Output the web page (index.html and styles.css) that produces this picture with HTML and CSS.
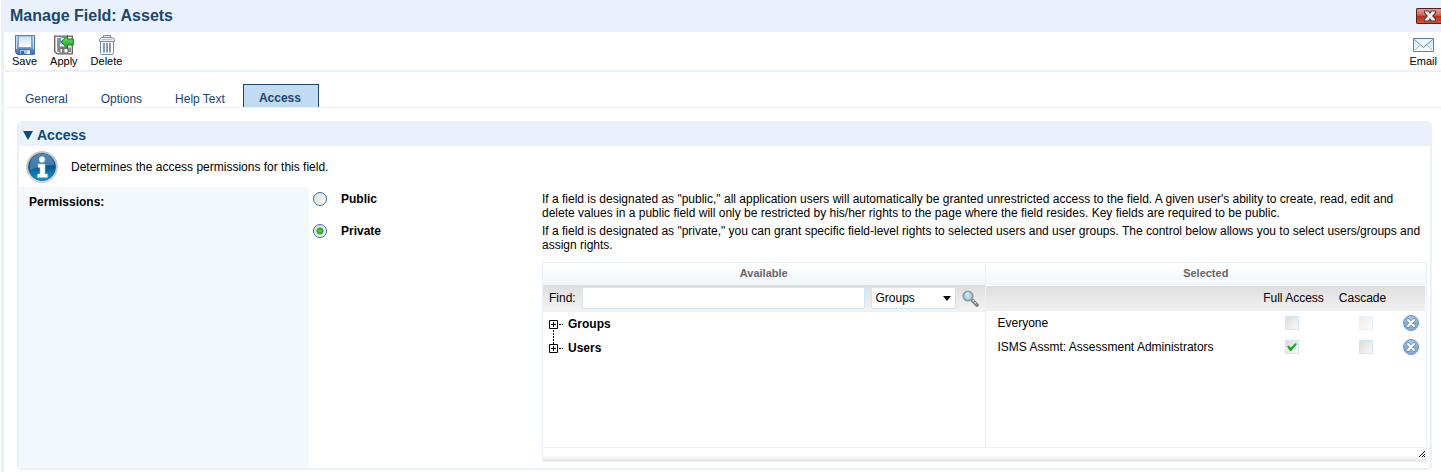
FILE: index.html
```html
<!DOCTYPE html>
<html lang="en">
<head>
<meta charset="utf-8">
<title>Manage Field: Assets</title>
<link rel="stylesheet" href="styles.css">
</head>
<body>
<svg class="defs" aria-hidden="true">
  <defs>
    <linearGradient id="blue" x1="0" y1="0" x2="0" y2="1"><stop offset="0" stop-color="#a9cbee"/><stop offset=".6" stop-color="#6d9ad0"/><stop offset="1" stop-color="#3f6db0"/></linearGradient>
    <linearGradient id="paper" x1="0" y1="0" x2="0" y2="1"><stop offset="0" stop-color="#c9e0f2"/><stop offset="1" stop-color="#ffffff"/></linearGradient>
    <linearGradient id="green" x1="0" y1="0" x2="0" y2="1"><stop offset="0" stop-color="#7be06a"/><stop offset="1" stop-color="#0fa51a"/></linearGradient>
    <linearGradient id="info" x1="0" y1="0" x2="0" y2="1"><stop offset="0" stop-color="#2a6b9d"/><stop offset=".5" stop-color="#0a578f"/><stop offset="1" stop-color="#0aa0e4"/></linearGradient>
    <linearGradient id="rim" x1="0" y1="0" x2="0" y2="1"><stop offset="0" stop-color="#b9b9b9"/><stop offset="1" stop-color="#e2e2e2"/></linearGradient>
    <radialGradient id="lens"><stop offset="0" stop-color="#d9f2fc"/><stop offset="1" stop-color="#7fb9de"/></radialGradient>
    <symbol id="remove" viewBox="0 0 16 16">
      <circle cx="8" cy="8" r="7.500" fill="#86add9" stroke="#6c96cc"/>
      <path d="M2 6a6.300 6.300 0 0 1 12 0Q8 9 2 6z" fill="#a9c6e8"/>
      <path d="M5.200 5.200l5.600 5.600M10.800 5.200L5.200 10.800" stroke="#5f8ac4" stroke-width="4" stroke-linecap="round"/>
      <path d="M5.200 5.200l5.600 5.600M10.800 5.200L5.200 10.800" stroke="#fff" stroke-width="2.400" stroke-linecap="round"/>
    </symbol>
  </defs>
</svg>
<div class="page">
  <header class="titlebar">
    <h1>Manage Field: Assets</h1>
    <button class="close" aria-label="Close">
      <svg width="12" height="12" viewBox="0 0 12 12"><path d="M.5 1h4L6 3l1.500-2h4v2L8.800 6l2.700 3v2h-4L6 9l-1.500 2h-4V9l2.700-3L.5 3z" fill="#f6f1f0" stroke="#54403e" stroke-width="1.200"/></svg>
    </button>
  </header>

  <div class="toolbar">
    <button class="tool">
      <svg width="20" height="20" viewBox="0 0 20 20"><path d="M.500.500h19v19h-17l-2-2z" fill="url(#blue)" stroke="#4f77aa"/><path d="M3.500 1h13v11.500h-13z" fill="url(#paper)" stroke="#6f98c8" stroke-width=".8"/><path d="M1.500 1v13M18.500 1v13" stroke="#c9def4"/><path d="M4.500 19v-4.500h11V19z" fill="#a9c3e2" stroke="#3d66a0" stroke-width=".8"/><path d="M6 16h3v3H6z" fill="#3f6ba8"/><path d="M11 19l3-4h1v4z" fill="#edf4fb"/></svg>
      <span>Save</span>
    </button>
    <button class="tool">
      <svg width="20" height="20" viewBox="0 0 20 20"><path d="M.700 1.200h17.600v17.600H3l-2.300-2.300z" fill="#fbfbfb" stroke="#606060" stroke-width="1.300"/><path d="M3 3h3v14H4l-1-1zM14 12.500h3V17h-3z" fill="#909090"/><path d="M6 11.500h7V13H6z" fill="#777"/><path d="M6 13.500h8V18H6z" fill="#fff" stroke="#707070"/><path d="M8 14h2.500v4H8z" fill="#7d7d7d"/><path d="M6.500 2.500h5v2l-5 4z" fill="#dff1fb" stroke="#5aaad5"/><path d="M7 7L13.500.700V4h5.800v6h-5.800v3.300z" fill="url(#green)" stroke="#197a20"/></svg>
      <span>Apply</span>
    </button>
    <button class="tool">
      <svg width="20" height="20" viewBox="0 0 20 20"><g fill="none" stroke="#6a8db5"><path d="M6.500 2V.500h7V2M4.500 2.500h11l2 2v2h-15v-2z" fill="#e9f1f8"/><path d="M3.500 6.500v11l1 2h11l1-2v-11z" fill="#fff"/><path d="M4.500 4.500h11" stroke="#b0c4d9"/></g><path d="M7 8v9.500M10 8v9.500M13 8v9.500" stroke="#8190a5" stroke-width="1.800"/></svg>
      <span>Delete</span>
    </button>
    <button class="tool email">
      <svg width="21" height="20" viewBox="0 0 21 20"><path d="M.500 3.500h20v13H.500z" fill="url(#paper)" stroke="#5584ab"/><path d="M2 15l6-6M19 15l-6-6" stroke="#9db8cf" fill="none"/><path d="M1.500 4.500l9 8 9-8" fill="#f9fcff" stroke="#6d91b2"/></svg>
      <span>Email</span>
    </button>
  </div>

  <nav class="tabs">
    <a href="#general">General</a>
    <a href="#options">Options</a>
    <a href="#help">Help Text</a>
    <a href="#access" class="active" aria-current="page">Access</a>
  </nav>

  <section class="panel" id="access">
    <h2><svg width="10" height="9" viewBox="0 0 10 9"><path d="M0 0h10L5 9z" fill="#064a7e"/></svg>Access</h2>
    <div class="intro">
      <svg width="32" height="32" viewBox="0 0 32 32"><circle cx="16" cy="16" r="15.500" fill="url(#rim)" stroke="#c4c4c4"/><circle cx="16" cy="16" r="13.500" fill="url(#info)" stroke="#2d5f85"/><path d="M4 15a12 12 0 0 1 24-1Q16 14 4 19z" fill="#6fa3c9" opacity=".5"/><circle cx="16" cy="8.500" r="3" fill="#fff" stroke="#aebfcc" stroke-width=".6"/><path d="M12 13h7v10h2.500v3.500h-10V23H14v-6.500h-2z" fill="#fff" stroke="#aebfcc" stroke-width=".6"/></svg>
      <p>Determines the access permissions for this field.</p>
    </div>
    <div class="body">
      <div class="label" id="perm">Permissions:</div>
      <div class="choices" role="radiogroup" aria-labelledby="perm">
        <div class="choice">
          <label><input type="radio" name="permission">Public</label>
          <p>If a field is designated as "public," all application users will automatically be granted unrestricted access to the field. A given user's ability to create, read, edit and delete values in a public field will only be restricted by his/her rights to the page where the field resides. Key fields are required to be public.</p>
        </div>
        <div class="choice">
          <label><input type="radio" name="permission" checked>Private</label>
          <p>If a field is designated as "private," you can grant specific field-level rights to selected users and user groups. The control below allows you to select users/groups and assign rights.</p>
        </div>
        <div class="picker">
          <div class="lists">
            <div class="available">
              <h3>Available</h3>
              <div class="find">
                <label for="find">Find:</label>
                <input type="text" id="find">
                <span class="select"><select aria-label="Find in"><option>Groups</option><option>Users</option></select></span>
                <button class="search" aria-label="Search">
                  <svg width="17" height="17" viewBox="0 0 17 17"><path d="M10 10l5 5" stroke="#777" stroke-width="3.600" stroke-linecap="round"/><path d="M10.500 10l4.500 4.500" stroke="#ddd" stroke-width="1.600" stroke-dasharray="2 1"/><circle cx="6" cy="6" r="4.800" fill="url(#lens)" stroke="#959ba0" stroke-width="1.600"/><path d="M3.500 5a3 3 0 0 1 3-2" stroke="#fff" fill="none"/></svg>
                </button>
              </div>
              <ul class="tree">
                <li><button aria-label="Expand Groups"><svg width="15" height="24" viewBox="0 0 15 24"><path d="M.500 8.500h8v8h-8zM2 12.500h5M4.500 10v5" fill="none" stroke="#000"/><path d="M10 12.500h4M4.500 18v6" stroke="#000" stroke-dasharray="2 1"/></svg></button>Groups</li>
                <li><button aria-label="Expand Users"><svg width="15" height="24" viewBox="0 0 15 24"><path d="M.500 8.500h8v8h-8zM2 12.500h5M4.500 10v5" fill="none" stroke="#000"/><path d="M10 12.500h4M4.500 0v8" stroke="#000" stroke-dasharray="2 1"/></svg></button>Users</li>
              </ul>
            </div>
            <div class="selected">
              <h3>Selected</h3>
              <table>
                <thead><tr><th class="name"></th><th class="full">Full Access</th><th class="cascade">Cascade</th><th class="remove"></th></tr></thead>
                <tbody>
                  <tr><td class="name">Everyone</td><td><input type="checkbox" aria-label="Full access for Everyone"></td><td><input type="checkbox" disabled aria-label="Cascade for Everyone"></td><td><button aria-label="Remove Everyone"><svg width="16" height="16"><use href="#remove"/></svg></button></td></tr>
                  <tr><td class="name">ISMS Assmt: Assessment Administrators</td><td><input type="checkbox" checked aria-label="Full access for Assessment Administrators"></td><td><input type="checkbox" aria-label="Cascade for Assessment Administrators"></td><td><button aria-label="Remove Assessment Administrators"><svg width="16" height="16"><use href="#remove"/></svg></button></td></tr>
                </tbody>
              </table>
            </div>
          </div>
          <div class="grip"><svg width="6" height="6" viewBox="0 0 6 6" shape-rendering="crispEdges"><path d="M5 0h1v1H5zM4 1h1v1H4zM3 2h1v1H3zM2 3h1v1H2zM1 4h1v1H1zM0 5h1v1H0zM5 3h1v1H5zM4 4h1v1H4zM3 5h1v1H3zM5 5h1v1H5z" fill="#000"/></svg></div>
        </div>
      </div>
    </div>
  </section>
</div>
</body>
</html>
```

FILE: styles.css
```css
* { box-sizing: border-box; }
body, h1, h2, h3, p, ul { margin: 0; padding: 0; }
body {
  background: #fff;
  color: #000;
  font: 12px/14px "Liberation Sans", Arial, sans-serif;
}
button, input, select { font: inherit; color: inherit; margin: 0; }
button { border: 0; padding: 0; background: none; cursor: pointer; }
svg { display: block; flex: none; }
.defs { position: absolute; width: 0; height: 0; }

.page {
  margin-left: 1px;
  border-left: 3px solid #e9f2fc;
  min-height: 100vh;
}
.titlebar {
  display: flex;
  align-items: center;
  justify-content: space-between;
  height: 32px;
  padding-left: 6px;
  background: #e9f2fc;
}
h1 { font-size: 16px; line-height: 18px; color: #1b466f; }
.close {
  display: flex;
  align-items: center;
  justify-content: center;
  width: 25px;
  height: 16px;
  padding-left: 2px;
  border: 1px solid #5c1b17;
  border-right: 0;
  border-radius: 2px 0 0 2px;
  background: linear-gradient(#e2a194, #cf6350 45%, #bb2d17 50%, #d0503a);
}

.toolbar {
  display: flex;
  gap: 13px;
  height: 40px;
  margin-left: 1px;
  padding: 3px 4px 0 7px;
  border-bottom: 2px solid #e9f2fc;
}
.tool {
  display: flex;
  flex-direction: column;
  align-items: center;
  font-size: 11px;
  line-height: 13px;
}
.email { margin-left: auto; }

.tabs {
  display: flex;
  align-items: flex-end;
  height: 36px;
  margin-left: 1px;
  padding-left: 4px;
  border-bottom: 1px solid #e9f2fc;
}
.tabs a {
  padding: 0 17px 1px 16px;
  color: #1b466f;
  text-decoration: none;
}
.tabs .active {
  margin-left: 1px;
  padding: 6px 17px 2px 15px;
  border: 1px solid #1b466f;
  border-bottom: 0;
  background: #c1dbf2;
  font-weight: bold;
}

.panel {
  margin: 13px 9px 0 13px;
  border: 2px solid #e9f2fc;
  border-top: 0;
  border-radius: 5px;
  overflow: hidden;
}
h2 {
  display: flex;
  align-items: center;
  gap: 4px;
  height: 25px;
  padding: 3px 4px 0;
  background: #e9f2fc;
  color: #064a7e;
  font-size: 14px;
  line-height: 16px;
}
.intro {
  display: flex;
  align-items: center;
  gap: 13px;
  height: 41px;
  padding-left: 7px;
}
.body { display: flex; }
.label {
  flex: none;
  width: 290px;
  padding: 8px 10px;
  background: #f3f8fd;
  font-weight: bold;
}
.choices { flex: 1; min-width: 0; padding: 5px 3px 6px 4px; }
.choice { display: flex; margin-bottom: 4px; }
.choice label {
  flex: none;
  display: flex;
  gap: 14px;
  width: 229px;
  height: 14px;
  align-items: center;
  font-weight: bold;
}
.choice p { max-width: 884px; padding-right: 3px; }
input[type="radio"] {
  appearance: none;
  width: 14px;
  height: 14px;
  border: 1px solid #3d6fa3;
  border-radius: 50%;
  background: linear-gradient(135deg, #dcdcd7, #fff);
}
input[type="radio"]:checked {
  background: radial-gradient(circle, #55c455 0 1px, #21a121 3px, transparent 4px), linear-gradient(135deg, #dcdcd7, #fff);
}

.picker {
  margin: 10px 0 0 229px;
  border: 1px solid #e9f2fc;
}
.lists { display: grid; grid-template-columns: 1fr 1fr; min-height: 184px; }
.selected { border-left: 1px solid #e9f2fc; }
h3 {
  height: 22px;
  background: linear-gradient(#fff, #eff6fb);
  color: #666;
  font-size: 11px;
  line-height: 21px;
  text-align: center;
}
.find {
  display: flex;
  align-items: center;
  gap: 6px;
  height: 27px;
  padding: 0 6px;
  border-bottom: 1px solid #e9f2fc;
  background: linear-gradient(#dedede, #f3f3f3);
}
.find input {
  flex: 1;
  min-width: 0;
  height: 22px;
  padding: 0 4px;
  border: 1px solid #cfe6f8;
  border-radius: 2px;
  background: #fff;
}
.select { display: flex; position: relative; width: 85px; }
.select::after {
  content: "";
  position: absolute;
  right: 5px;
  top: 9px;
  border: solid transparent;
  border-width: 5px 4px 0;
  border-top-color: #000;
  pointer-events: none;
}
select {
  appearance: none;
  width: 100%;
  height: 22px;
  padding: 0 4px;
  border: 1px solid #cfe6f8;
  border-radius: 2px;
  background: #fff;
}
.tree { list-style: none; padding-left: 6px; }
.tree li {
  display: flex;
  align-items: center;
  gap: 4px;
  height: 24px;
  font-weight: bold;
}

.selected { padding-right: 1px; }
.selected h3 { margin-right: -1px; }
table { width: 100%; border-collapse: collapse; table-layout: fixed; }
thead tr {
  height: 26px;
  background: linear-gradient(#fff 1px, #dedede 1px, #f1f1f1);
}
th, td { height: 24px; padding: 0; text-align: center; font-weight: normal; }
.name { padding-left: 12px; text-align: left; }
.full { width: 88px; padding-left: 3px; }
.cascade { width: 60px; padding-right: 7px; }
.remove { width: 29px; }
td button, td input { display: block; margin: 0 auto; width: 16px; }
input[type="checkbox"] {
  appearance: none;
  width: 14px;
  height: 14px;
  border: 1px solid #cfe6f8;
  background: linear-gradient(135deg, #dedbd6, #fafafa);
}
input[type="checkbox"]:disabled { opacity: .5; }
input[type="checkbox"]:checked::before {
  content: "";
  display: block;
  height: 8px;
  margin: 2px 1px;
  background: #18a51f;
  clip-path: polygon(0 40%, 18% 30%, 38% 58%, 85% 0, 100% 14%, 42% 100%, 30% 100%);
}
.grip {
  display: flex;
  align-items: flex-end;
  justify-content: flex-end;
  height: 14px;
  padding: 0 1px 4px 0;
  border-top: 1px solid #e9f2fc;
  background: linear-gradient(#fff 60%, #e4e4e4);
}
```
